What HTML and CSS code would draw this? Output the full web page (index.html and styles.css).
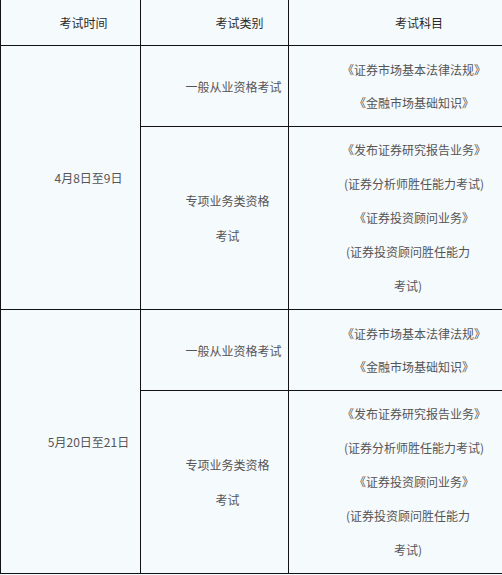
FILE: index.html
```html
<!DOCTYPE html>
<html lang="zh-CN">
<head>
<meta charset="utf-8">
<title>考试安排</title>
<link rel="stylesheet" href="styles.css">
</head>
<body>
<table class="schedule">
  <colgroup>
    <col class="c1">
    <col class="c2">
    <col class="c3">
  </colgroup>
  <thead>
    <tr class="head">
      <th class="h1">考试时间</th>
      <th class="h2">考试类别</th>
      <th class="h3">考试科目</th>
    </tr>
  </thead>
  <tbody>
    <tr class="row-a">
      <td class="date" rowspan="2">4月8日至9日</td>
      <td class="cat">一般从业资格考试</td>
      <td class="subj">
        <div class="ln">《证券市场基本法律法规》</div>
        <div class="ln">《金融市场基础知识》</div>
      </td>
    </tr>
    <tr class="row-b">
      <td class="cat cat-b">
        <div class="ln2">专项业务类资格</div>
        <div class="ln2">考试</div>
      </td>
      <td class="subj">
        <div class="ln">《发布证券研究报告业务》</div>
        <div class="ln">(证券分析师胜任能力考试)</div>
        <div class="ln">《证券投资顾问业务》</div>
        <div class="ln wrap">(证券投资顾问胜任能力</div>
        <div class="ln wrap">考试)</div>
      </td>
    </tr>
    <tr class="row-a">
      <td class="date" rowspan="2">5月20日至21日</td>
      <td class="cat">一般从业资格考试</td>
      <td class="subj">
        <div class="ln">《证券市场基本法律法规》</div>
        <div class="ln">《金融市场基础知识》</div>
      </td>
    </tr>
    <tr class="row-b">
      <td class="cat cat-b">
        <div class="ln2">专项业务类资格</div>
        <div class="ln2">考试</div>
      </td>
      <td class="subj">
        <div class="ln">《发布证券研究报告业务》</div>
        <div class="ln">(证券分析师胜任能力考试)</div>
        <div class="ln">《证券投资顾问业务》</div>
        <div class="ln wrap">(证券投资顾问胜任能力</div>
        <div class="ln wrap">考试)</div>
      </td>
    </tr>
  </tbody>
</table>
</body>
</html>
```

FILE: styles.css
```css
html, body {
  margin: 0;
  padding: 0;
  background: #f5fafd;
}

body {
  font-family: "Noto Sans CJK SC", "Microsoft YaHei", sans-serif;
  font-size: 12px;
  color: #555;
}

.schedule {
  border-collapse: collapse;
  table-layout: fixed;
  width: 502px;
  background: #f5fafd;
}

.c1 { width: 140px; }
.c2 { width: 148px; }
.c3 { width: 214px; }

.schedule th,
.schedule td {
  border: 1px solid #111;
  text-align: center;
  vertical-align: middle;
}

.schedule .head th {
  border-top: 0;
  height: 45px;
  padding: 0;
  font-weight: normal;
  color: #2a2a2a;
  line-height: 20px;
}

.schedule .head .h1 { padding-left: 26px; }
.schedule .head .h2 { padding-left: 50px; }
.schedule .head .h3 { padding-left: 47px; }

.schedule .date {
  padding: 0 0 0 36px;
}

.schedule .cat {
  padding: 0 0 0 38px;
}

.schedule .cat-b {
  padding: 0 0 0 26px;
}

.schedule .subj {
  padding: 7px 0 7px 37px;
}

.schedule .row-b .subj {
  padding-top: 6px;
  padding-bottom: 6px;
}

.ln {
  line-height: 33px;
  white-space: nowrap;
}

.row-b .ln {
  line-height: 34px;
}

.ln2 {
  line-height: 35px;
}

.wrap {
  padding-right: 12px;
}
```
